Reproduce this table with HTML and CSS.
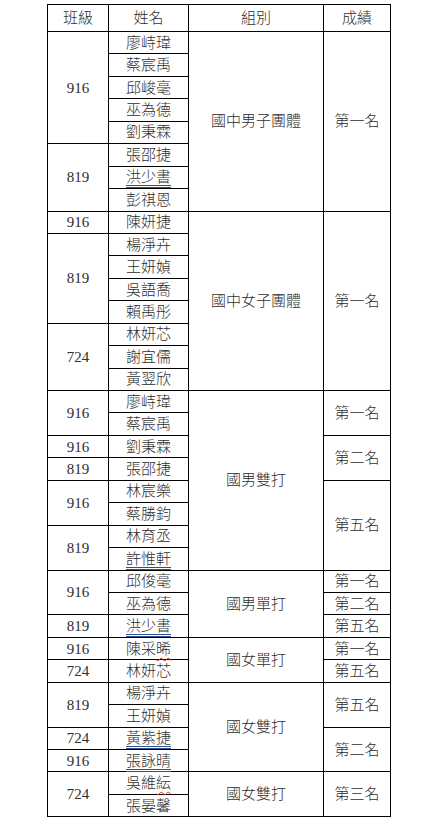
FILE: index.html
```html
<!DOCTYPE html>
<html lang="zh-Hant">
<head>
<meta charset="utf-8">
<title>成績表</title>
<link rel="stylesheet" href="styles.css">
</head>
<body>
<table class="results">
  <colgroup>
    <col class="c-class">
    <col class="c-name">
    <col class="c-group">
    <col class="c-rank">
  </colgroup>
  <thead>
    <tr class="head"><th>班級</th><th>姓名</th><th>組別</th><th>成績</th></tr>
  </thead>
  <tbody>
    <tr><td rowspan="5">916</td><td>廖峙瑋</td><td rowspan="8">國中男子團體</td><td rowspan="8">第一名</td></tr>
    <tr><td>蔡宸禹</td></tr>
    <tr><td>邱峻毫</td></tr>
    <tr><td>巫為德</td></tr>
    <tr><td>劉秉霖</td></tr>
    <tr><td rowspan="3">819</td><td>張邵捷</td></tr>
    <tr><td><span class="gram">洪少書</span></td></tr>
    <tr><td>彭祺恩</td></tr>

    <tr><td>916</td><td>陳妍捷</td><td rowspan="8">國中女子團體</td><td rowspan="8">第一名</td></tr>
    <tr><td rowspan="4">819</td><td>楊淨卉</td></tr>
    <tr><td>王妍媜</td></tr>
    <tr><td>吳語喬</td></tr>
    <tr><td>賴禹彤</td></tr>
    <tr><td rowspan="3">724</td><td>林妍芯</td></tr>
    <tr><td>謝宜儒</td></tr>
    <tr><td>黃翌欣</td></tr>

    <tr><td rowspan="2">916</td><td>廖峙瑋</td><td rowspan="8">國男雙打</td><td rowspan="2">第一名</td></tr>
    <tr><td>蔡宸禹</td></tr>
    <tr><td>916</td><td>劉秉霖</td><td rowspan="2">第二名</td></tr>
    <tr><td>819</td><td>張邵捷</td></tr>
    <tr><td rowspan="2">916</td><td>林宸樂</td><td rowspan="4">第五名</td></tr>
    <tr><td>蔡勝鈞</td></tr>
    <tr><td rowspan="2">819</td><td>林育丞</td></tr>
    <tr><td><span class="gram">許惟軒</span></td></tr>

    <tr><td rowspan="2">916</td><td>邱俊毫</td><td rowspan="3">國男單打</td><td>第一名</td></tr>
    <tr><td>巫為德</td><td>第二名</td></tr>
    <tr><td>819</td><td><span class="gram">洪少書</span></td><td>第五名</td></tr>

    <tr><td>916</td><td>陳采<span class="spell">晞</span></td><td rowspan="2">國女單打</td><td>第一名</td></tr>
    <tr><td>724</td><td>林妍芯</td><td>第五名</td></tr>

    <tr><td rowspan="2">819</td><td>楊淨卉</td><td rowspan="4">國女雙打</td><td rowspan="2">第五名</td></tr>
    <tr><td>王妍媜</td></tr>
    <tr><td>724</td><td><span class="gram">黃紫捷</span></td><td rowspan="2">第二名</td></tr>
    <tr><td>916</td><td><span class="gram">張詠晴</span></td></tr>

    <tr><td rowspan="2">724</td><td>吳維<span class="spell">紜</span></td><td rowspan="2">國女雙打</td><td rowspan="2">第三名</td></tr>
    <tr><td>張晏馨</td></tr>
  </tbody>
</table>
</body>
</html>
```

FILE: styles.css
```css
html, body {
  margin: 0;
  padding: 0;
  background: #ffffff;
}

body {
  font-family: "Liberation Serif", "Noto Sans CJK TC", serif;
  font-size: 15px;
  font-weight: 300;
  color: #2e2e2e;
}

.results {
  border-collapse: collapse;
  table-layout: fixed;
  width: 343px;
  margin: 4px 0 0 47px;
}

.c-class { width: 61px; }
.c-name { width: 80px; }
.c-group { width: 135px; }
.c-rank { width: 67px; }

.results th,
.results td {
  border: 1px solid #000000;
  padding: 0;
  text-align: center;
  vertical-align: middle;
  font-weight: 300;
  line-height: 18px;
  white-space: nowrap;
}

.results thead tr {
  height: 27px;
}

.results tbody tr {
  height: 22.45px;
}

.gram {
  text-decoration: underline double #2f4f8f;
  text-underline-offset: 3px;
  text-decoration-thickness: 1px;
}

.spell {
  text-decoration: underline wavy #d93025;
  text-underline-offset: 3px;
  text-decoration-thickness: 1px;
}
```
